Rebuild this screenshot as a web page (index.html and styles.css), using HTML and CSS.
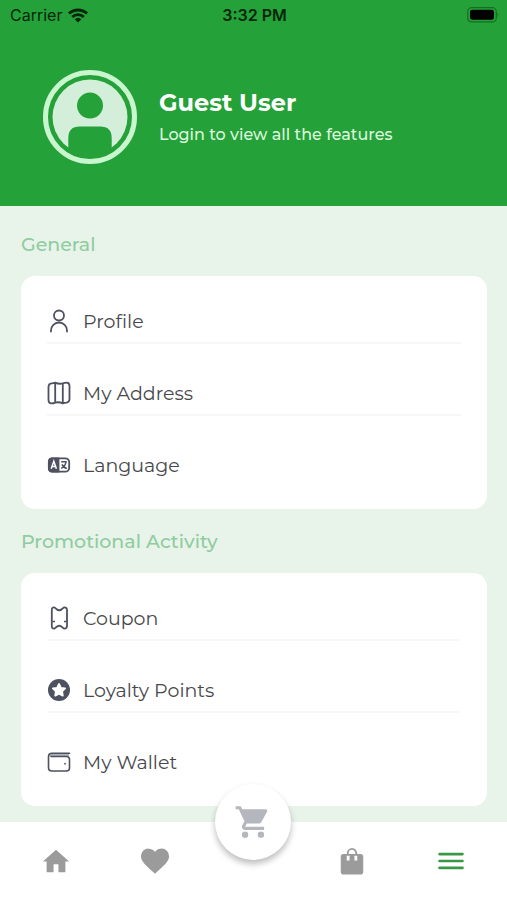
FILE: index.html
```html
<!DOCTYPE html>
<html lang="en">
<head>
<meta charset="utf-8">
<meta name="viewport" content="width=device-width, initial-scale=1">
<title>Menu</title>
<link rel="stylesheet" href="styles.css">
</head>
<body>
<div class="app">
  <header class="hero">
    <div class="status">
      <div class="status-left">
        <span>Carrier</span>
        <svg class="wifi" viewBox="0 0 20 15" aria-hidden="true"><g fill="none" stroke="currentColor" stroke-width="2.8"><path d="M1 5.600a13 13 0 0 1 18 0"/><path d="M4.200 9a8.400 8.400 0 0 1 11.600 0"/></g><path d="M10 14.600 6.700 11.200a4.800 4.800 0 0 1 6.600 0z" fill="currentColor"/></svg>
      </div>
      <time class="clock">3:32 PM</time>
      <div class="status-right">
        <svg class="battery" viewBox="0 0 33 16" aria-hidden="true"><rect x="1.700" y=".7" width="28.600" height="14.200" rx="4" fill="none" stroke="#14701f" stroke-width="1.200"/><rect x="4" y="2.800" width="24" height="10" rx="2.400" fill="#000"/><path d="M31.500 5.600q1.800 2.200 0 4.400z" fill="#14701f"/></svg>
      </div>
    </div>
    <div class="user">
      <svg class="avatar" viewBox="0 0 94 94" aria-hidden="true"><circle cx="47" cy="47" r="44.500" fill="none" stroke="#c9f5cf" stroke-width="5"/><circle cx="47" cy="47" r="37.500" fill="#d3eed9"/><circle cx="47" cy="35.600" r="13" fill="#24a138"/><path d="M25.300 80V68q0-11.500 11.500-11.500h20.400q11.500 0 11.500 11.500v12q-21.700 10-43.400 0z" fill="#24a138"/></svg>
      <div class="user-text">
        <h1>Guest User</h1>
        <p>Login to view all the features</p>
      </div>
    </div>
  </header>

  <main class="content">
    <section>
      <h2>General</h2>
      <ul class="card">
        <li><a href="#profile"><svg viewBox="0 0 24 24" aria-hidden="true"><g fill="none" stroke="currentColor" stroke-width="1.800" stroke-linecap="round"><circle cx="12" cy="6.500" r="5"/><path d="M4 22.500v-1a8 8 0 0 1 16 0v1"/></g></svg>Profile</a></li>
        <li><a href="#address"><svg viewBox="0 0 24 24" aria-hidden="true"><path d="M1.500 6Q1.500 2.600 4.500 2.400Q6.500 2.200 8.200 1.600Q12 3.400 15.800 2.400Q17.500 1.600 19.500 1.600Q22.500 1.600 22.500 5V18Q22.500 21.200 19.500 21.600Q17.500 21.800 15.800 22.400Q12 20.600 8.200 21.600Q6.500 22.400 4.500 22.400Q1.500 22.400 1.500 19ZM8.200 1.600V21.600M15.800 2.400V22.400" fill="none" stroke="currentColor" stroke-width="1.800" stroke-linejoin="round"/></svg>My Address</a></li>
        <li><a href="#language"><svg viewBox="0 0 24 24" aria-hidden="true"><rect x="1.800" y="5.300" width="20.400" height="13.400" rx="4" fill="none" stroke="currentColor" stroke-width="1.800"/><path d="M12.400 4.500H5a4 4 0 0 0-4 4v7a4 4 0 0 0 4 4h7.400z" fill="currentColor"/><path d="M4.200 15.800 6.800 8.200 9.400 15.800M5.200 13.400h3.200" fill="none" stroke="#fff" stroke-width="1.500"/><path d="M14.200 8.800h4.800q-.8 4.800-4.800 6.600M15 11.400q1.600 3.400 4.800 4" fill="none" stroke="currentColor" stroke-width="1.500"/></svg>Language</a></li>
      </ul>
    </section>
    <section>
      <h2>Promotional Activity</h2>
      <ul class="card">
        <li><a href="#coupon"><svg viewBox="0 0 24 24" aria-hidden="true"><path d="M4.800 4Q4.800 1.200 7.400 1.400L9.400 3Q12.200 5.600 15 3L17 1.400Q20 1.200 20 4V20Q20 22.800 17 22.600L15 21Q12.200 18.400 9.400 21L7.400 22.600Q4.800 22.800 4.800 20Z" fill="none" stroke="currentColor" stroke-width="1.800" stroke-linejoin="round"/><path d="M5.500 15.500h2.500M17 15.500h2.500" stroke="currentColor" stroke-width="1.600"/></svg>Coupon</a></li>
        <li><a href="#points"><svg viewBox="0 0 24 24" aria-hidden="true"><circle cx="12" cy="12" r="11" fill="currentColor"/><path d="m12 6 1.900 3.800 4.200.6-3 3 .7 4.200-3.800-2-3.800 2 .7-4.200-3-3 4.200-.6z" fill="#fff" stroke="#fff" stroke-width="1.800" stroke-linejoin="round"/></svg>Loyalty Points</a></li>
        <li><a href="#wallet"><svg viewBox="0 0 24 24" aria-hidden="true"><path d="M2 5.500 4.500 3.500H22V6.200H2.400z" fill="currentColor" opacity=".45"/><g fill="none" stroke="currentColor" stroke-width="1.600" stroke-linecap="round"><path d="M22.500 3.300H5Q1.500 3.300 1.500 6.800v10.700q0 3.500 3.500 3.500h14.500q3 0 3-3V9.500q0-3-3-3H4"/><path d="M18 13.500v.4"/></g></svg>My Wallet</a></li>
      </ul>
    </section>
  </main>

  <nav class="tabs" aria-label="Main">
    <a href="#home" aria-label="Home"><svg viewBox="0 0 32 32" aria-hidden="true"><path d="M16 4 2 16.500h4V28h7.400v-8.500h5.200V28H26V16.500h4z" fill="currentColor"/></svg></a>
    <a href="#favourites" aria-label="Favourites"><svg viewBox="0 0 32 32" aria-hidden="true"><path d="m16 29.500-2-1.800C6.500 21 1 16.600 1 11a8 8 0 0 1 8.200-8.200c2.600 0 5.200 1.200 6.800 3.200a8.800 8.800 0 0 1 6.800-3.200A8 8 0 0 1 31 11c0 5.600-5.500 10-13 16.700z" fill="currentColor"/></svg></a>
    <a class="cart" href="#cart" aria-label="Cart"><svg viewBox="0 0 24 24" aria-hidden="true"><path d="M7 18a2 2 0 1 0 0 4 2 2 0 0 0 0-4zM1 2v2h2l3.600 7.600-1.350 2.450C4.520 15.370 5.480 17 7 17h12v-2H7.420a.25.25 0 0 1-.22-.37L8.100 13h7.450c.75 0 1.410-.41 1.750-1.030l3.580-6.490A1 1 0 0 0 20 4H5.210l-.94-2zM17 18a2 2 0 1 0 0 4 2 2 0 0 0 0-4z" fill="currentColor"/></svg></a>
    <a href="#orders" aria-label="Orders"><svg viewBox="0 0 32 32" aria-hidden="true"><path d="M7 8.500h18a3 3 0 0 1 3 3v16a3 3 0 0 1-3 3H7a3 3 0 0 1-3-3v-16a3 3 0 0 1 3-3z" fill="currentColor"/><path d="M11.500 12V7.500a4.500 4.500 0 0 1 9 0V12" fill="none" stroke="currentColor" stroke-width="2"/><path d="M10.400 10.500h3v5h-3zM18.600 10.500h3v5h-3z" fill="#fff"/></svg></a>
    <a class="active" href="#menu" aria-label="Menu"><svg viewBox="0 0 32 32" aria-hidden="true"><path d="M3.800 8.600h24.400M3.800 16h24.400M3.800 23.400h24.400" stroke="currentColor" stroke-width="2.900" stroke-linecap="round"/></svg></a>
  </nav>
</div>
</body>
</html>
```
FILE: styles.css
```css
* { box-sizing: border-box; }

body {
  margin: 0;
  background: #e8f3ea;
  color: #48484c;
  font-family: Montserrat, Inter, sans-serif;
}

h1, h2, p, ul { margin: 0; padding: 0; font-weight: 400; }
a { color: inherit; text-decoration: none; }
svg { display: block; flex: none; }

.app {
  min-height: 100vh;
  display: flex;
  flex-direction: column;
}

.hero {
  background: #24a138;
  padding-bottom: 42px;
}

.status {
  display: grid;
  grid-template-columns: 1fr auto 1fr;
  align-items: center;
  height: 30px;
  padding: 0 8px 0 10px;
  color: #05260a;
  font-family: Inter, sans-serif;
  font-size: 16px;
}
.status-left { display: flex; align-items: center; gap: 6px; }
.status-right { display: flex; justify-content: flex-end; }
.clock { font-weight: 600; }
.wifi { width: 20px; height: 15px; }
.battery { width: 33px; height: 16px; }

.user {
  display: flex;
  align-items: center;
  gap: 22px;
  padding: 40px 43px 0;
}
.avatar { width: 94px; height: 94px; }
.user-text { display: grid; gap: 4px; color: #fff; }
.user-text h1 { font-size: 24px; line-height: 32px; font-weight: 700; }
.user-text p { font-size: 16px; line-height: 24px; font-weight: 500; color: #dcf8df; }

.content {
  flex: 1;
  padding: 24px 20px 16px 21px;
}
h2 {
  color: #8fcca0;
  font-size: 19px;
  font-weight: 500;
  line-height: 30px;
}
.card {
  list-style: none;
  display: grid;
  gap: 28px;
  margin: 16px 0 18px;
  padding: 24px 26px 21px;
  border-radius: 14px;
  background: #fff;
}
section:last-child .card { margin-bottom: 0; }
.card a {
  display: flex;
  align-items: center;
  gap: 12px;
  height: 44px;
  border-bottom: 2px solid #f7f7f7;
  font-size: 19px;
}
.card li:last-child a { border-color: transparent; }
.card svg { width: 24px; height: 24px; color: #4d5160; }

.tabs {
  display: grid;
  grid-template-columns: repeat(5, 1fr);
  justify-items: center;
  height: 78px;
  padding: 0 7px;
  background: #fff;
  color: #9b9b9b;
}
.tabs a { display: grid; place-items: center; width: 48px; height: 78px; }
.tabs svg { width: 30px; height: 30px; }
.tabs .cart {
  width: 76px;
  height: 76px;
  margin-top: -38px;
  border-radius: 50%;
  background: #fff;
  color: #b4b8be;
  box-shadow: 0 4px 6px rgba(0, 0, 0, .26);
}
.tabs .cart svg { width: 38px; height: 38px; }
.tabs .active { color: #389846; }
```
